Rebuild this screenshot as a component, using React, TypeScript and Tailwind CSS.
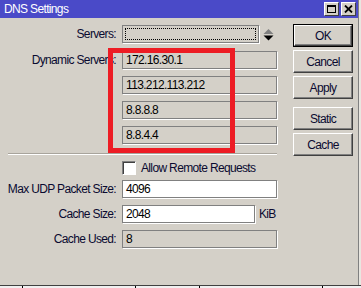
import React from "react";

function Field({ value, w, white }: { value?: string; w: number; white?: boolean }) {
  return (
    <div
      className={`h-[18px] border border-[#808080] shadow-[1px_1px_0_#ffffff] px-[3px] leading-[16px] text-black ${white ? "bg-white" : "bg-[#d4d0c8]"}`}
      style={{ width: w }}
    >
      {value}
    </div>
  );
}

function Row({ label, children }: { label: string; children: React.ReactNode }) {
  return (
    <div className="flex items-center h-[18px]">
      <div className="w-[117px] text-right pr-[1px] text-[#0a0a30] whitespace-nowrap">{label}</div>
      <div className="ml-[5px] flex items-center">{children}</div>
    </div>
  );
}

function Btn({ label, def }: { label: string; def?: boolean }) {
  const inner = (
    <div className="w-full h-full flex items-center justify-center border border-t-white border-l-white border-r-[#404040] border-b-[#404040] shadow-[inset_-1px_-1px_0_#808080] text-[#0a0a30]">
      {label}
    </div>
  );
  return def ? (
    <div className="w-[60px] h-[23px] border border-black">{inner}</div>
  ) : (
    <div className="w-[60px] h-[23px]">{inner}</div>
  );
}

export default function App() {
  return (
    <div className="w-[361px] h-[288px] overflow-hidden bg-[#d4d0c8] font-['Liberation_Sans',Arial,sans-serif] text-[12px] tracking-[-0.65px] relative flex flex-col">
      <div className="flex flex-1 min-h-0">
        <div className="w-[358px] flex flex-col">
          {/* title bar */}
          <div className="h-[18px] bg-[#4a4ac8] flex items-center justify-between pl-[4px] pr-[2px]">
            <span className="text-white text-[12px] leading-none">DNS Settings</span>
            <div className="flex gap-[2px] items-center">
              <div className="w-[15px] h-[14px] bg-[#d4d0c8] border border-t-white border-l-white border-r-[#404040] border-b-[#404040] flex items-center justify-center">
                <div className="w-[9px] h-[8px] border border-black border-t-2" />
              </div>
              <div className="w-[15px] h-[14px] bg-[#d4d0c8] border border-t-white border-l-white border-r-[#404040] border-b-[#404040] flex items-center justify-center">
                <svg width="9" height="8" viewBox="0 0 9 8">
                  <path d="M1 0.5 L8 7.5 M8 0.5 L1 7.5" stroke="black" strokeWidth="1.8" />
                </svg>
              </div>
            </div>
          </div>
          {/* body */}
          <div className="flex-1 flex relative">
            <div className="w-[293px] flex flex-col">
              <div className="mt-[7px]">
                <Row label="Servers:">
                  <div className="w-[137px] h-[18px] border border-[#808080] shadow-[1px_1px_0_#ffffff] p-[2px]">
                    <div className="w-full h-full border border-dotted border-black" />
                  </div>
                  <svg className="ml-[4px]" width="11" height="13" viewBox="0 0 11 13">
                    <path d="M5.5 1 L10.5 6 L0.5 6 Z" fill="#808080" />
                    <path d="M0.5 7.5 L10.5 7.5 L5.5 12.5 Z" fill="black" />
                  </svg>
                </Row>
              </div>
              <div className="mt-[8px] flex flex-col gap-[7px]">
                <Row label="Dynamic Servers:">
                  <Field value="172.16.30.1" w={155} />
                </Row>
                <Row label="">
                  <Field value="113.212.113.212" w={155} />
                </Row>
                <Row label="">
                  <Field value="8.8.8.8" w={155} />
                </Row>
                <Row label="">
                  <Field value="8.8.4.4" w={155} />
                </Row>
              </div>
              <div className="mt-[9px] ml-[8px] w-[269px] h-[2px] border-t border-[#a8a49c] border-b border-b-white" />
              <div className="mt-[6px] flex items-center h-[14px]">
                <div className="ml-[122px] w-[14px] h-[14px] bg-white border border-t-[#808080] border-l-[#808080] border-r-white border-b-white shadow-[inset_1px_1px_0_#404040]" />
                <span className="ml-[5px] text-[#0a0a30]">Allow Remote Requests</span>
              </div>
              <div className="mt-[5px] flex flex-col gap-[7px]">
                <Row label="Max UDP Packet Size:">
                  <Field value="4096" w={155} white />
                </Row>
                <Row label="Cache Size:">
                  <Field value="2048" w={133} white />
                  <span className="ml-[4px] text-[#0a0a30]">KiB</span>
                </Row>
                <Row label="Cache Used:">
                  <Field value="8" w={155} />
                </Row>
              </div>
            </div>
            <div className="flex flex-col mt-[6px]">
              <Btn label="OK" def />
              <div className="mt-[3px]"><Btn label="Cancel" /></div>
              <div className="mt-[3px]"><Btn label="Apply" /></div>
              <div className="mt-[8px]"><Btn label="Static" /></div>
              <div className="mt-[3px]"><Btn label="Cache" /></div>
            </div>
            {/* red annotation */}
            <div className="absolute left-[108px] top-[30px] w-[127px] h-[105px] border-[5px] border-[#ed1c24]" />
          </div>
        </div>
        <div className="w-[3px] flex">
          <div className="w-[1px] bg-[#808080]" />
          <div className="w-[2px] bg-[#e8e6e0]" />
        </div>
      </div>
      <div className="h-[3px] border-t border-[#404040] bg-[#f0f0f0] flex">
        <div className="w-[23px] border-r border-black" />
        <div className="w-[113px] border-r border-black" />
        <div className="w-[64px] border-r border-black" />
        <div className="w-[123px] border-r border-black" />
      </div>
    </div>
  );
}
